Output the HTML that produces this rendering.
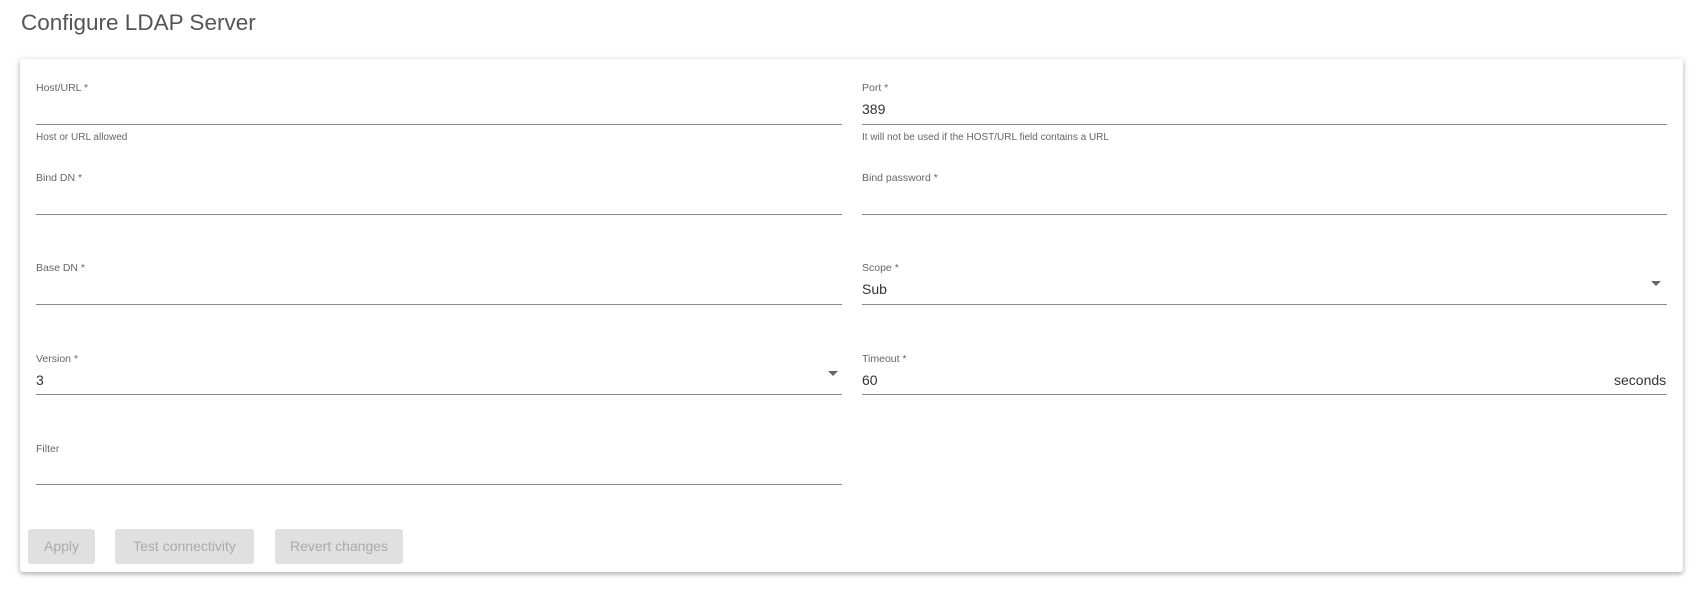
<!DOCTYPE html>
<html><head><style>
body{margin:0;width:1702px;height:601px;background:#fff;font-family:"Liberation Sans",sans-serif;position:relative;overflow:hidden}
.t{position:absolute;left:21px;top:10px;font-size:22.5px;color:#555}
.card{position:absolute;left:20px;top:59px;width:1663px;height:513px;background:#fff;border-radius:3px;box-shadow:0 2px 4px rgba(0,0,0,.25),0 1px 8px rgba(0,0,0,.12)}
.lb{position:absolute;font-size:10.5px;color:#666;white-space:nowrap}
.v{position:absolute;font-size:14px;color:#333}
.ln{position:absolute;height:1px;background:#8a8a8a}
.h{position:absolute;font-size:10px;color:#666;white-space:nowrap}
.arr{position:absolute;width:0;height:0;border-left:5px solid transparent;border-right:5px solid transparent;border-top:5px solid #666}
.b{position:absolute;top:529px;height:35px;background:#e0e0e0;border-radius:3px;color:#aaa;font-size:14px;line-height:35px;text-align:center}
</style></head><body>
<div class="t">Configure LDAP Server</div>
<div class="card"></div>

<div class="lb" style="left:36px;top:82px">Host/URL *</div>
<div class="ln" style="left:36px;width:806px;top:124px"></div>
<div class="h" style="left:36px;top:132px">Host or URL allowed</div>

<div class="lb" style="left:862px;top:82px">Port *</div>
<div class="v" style="left:862px;top:101px">389</div>
<div class="ln" style="left:862px;width:805px;top:124px"></div>
<div class="h" style="left:862px;top:132px">It will not be used if the HOST/URL field contains a URL</div>

<div class="lb" style="left:36px;top:172px">Bind DN *</div>
<div class="ln" style="left:36px;width:806px;top:214px"></div>
<div class="lb" style="left:862px;top:172px">Bind password *</div>
<div class="ln" style="left:862px;width:805px;top:214px"></div>

<div class="lb" style="left:36px;top:262px">Base DN *</div>
<div class="ln" style="left:36px;width:806px;top:304px"></div>
<div class="lb" style="left:862px;top:262px">Scope *</div>
<div class="v" style="left:862px;top:281px">Sub</div>
<div class="arr" style="left:1651px;top:281px"></div>
<div class="ln" style="left:862px;width:805px;top:304px"></div>

<div class="lb" style="left:36px;top:353px">Version *</div>
<div class="v" style="left:36px;top:372px">3</div>
<div class="arr" style="left:828px;top:371px"></div>
<div class="ln" style="left:36px;width:806px;top:394px"></div>
<div class="lb" style="left:862px;top:353px">Timeout *</div>
<div class="v" style="left:862px;top:372px">60</div>
<div class="v" style="left:1614px;top:372px">seconds</div>
<div class="ln" style="left:862px;width:805px;top:394px"></div>

<div class="lb" style="left:36px;top:443px">Filter</div>
<div class="ln" style="left:36px;width:806px;top:484px"></div>

<div class="b" style="left:28px;width:67px">Apply</div>
<div class="b" style="left:115px;width:139px">Test connectivity</div>
<div class="b" style="left:275px;width:128px">Revert changes</div>
</body></html>
